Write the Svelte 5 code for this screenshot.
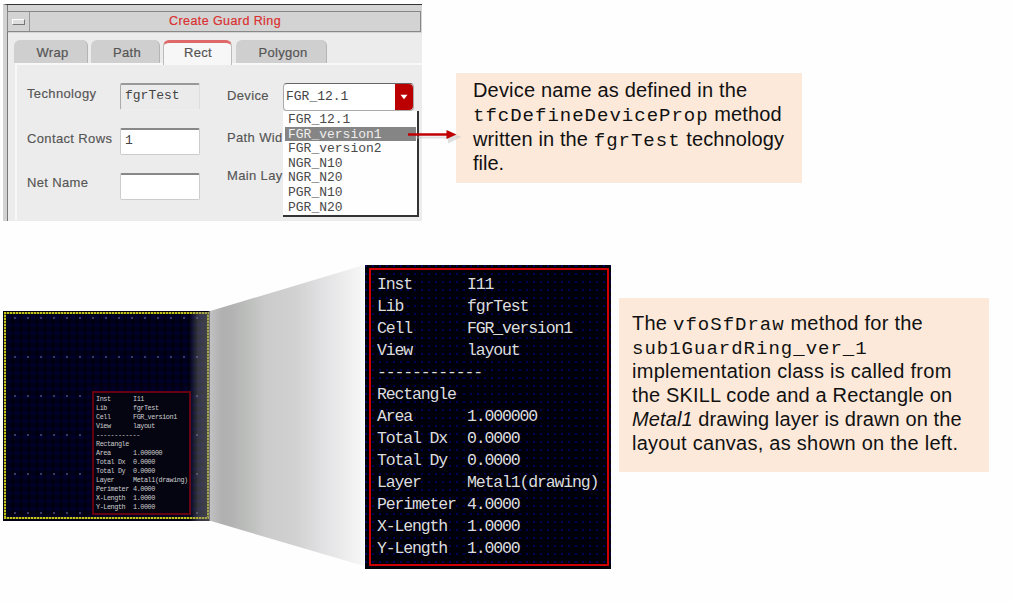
<script>
  const tabs = [
    { name: 'Wrap', w: 74, gap: 3 },
    { name: 'Path', w: 69, gap: 3 },
    { name: 'Rect', w: 69, gap: 4, active: true },
    { name: 'Polygon', w: 91, gap: 0 }
  ];
  const options = ['FGR_12.1', 'FGR_version1', 'FGR_version2', 'NGR_N10', 'NGR_N20', 'PGR_N10', 'PGR_N20'];
  const info = [
    ['Inst', 'I11'],
    ['Lib', 'fgrTest'],
    ['Cell', 'FGR_version1'],
    ['View', 'layout'],
    ['------------', ''],
    ['Rectangle', ''],
    ['Area', '1.000000'],
    ['Total Dx', '0.0000'],
    ['Total Dy', '0.0000'],
    ['Layer', 'Metal1(drawing)'],
    ['Perimeter', '4.0000'],
    ['X-Length', '1.0000'],
    ['Y-Length', '1.0000']
  ];
</script>

{#snippet report()}
  {#each info as [key, value]}
    <div class="line"><span class="key">{key}</span><span>{value}</span></div>
  {/each}
{/snippet}

<main>
  <section class="top">
    <div class="window">
      <header>
        <div class="sysmenu"><i></i></div>
        <h1>Create Guard Ring</h1>
      </header>
      <nav>
        {#each tabs as t}
          <div class="tab" class:active={t.active} style="width:{t.w}px;margin-right:{t.gap}px">{t.name}</div>
        {/each}
      </nav>
      <div class="form">
        <div class="labels">
          <span>Technology</span><span>Contact Rows</span><span>Net Name</span>
        </div>
        <div class="fields">
          <div class="field off">fgrTest</div>
          <div class="field">1</div>
          <div class="field"></div>
        </div>
        <div class="labels right">
          <span>Device</span><span>Path Wid</span><span>Main Lay</span>
        </div>
        <div class="combo">
          <div class="select">
            <span>FGR_12.1</span>
            <b><svg width="8" height="6" viewBox="0 0 8 6"><path d="M0.5 0.8H7.5L4 5.2Z" fill="#fff" /></svg></b>
          </div>
          <div class="list">
            {#each options as o, i}
              <div class="option" class:picked={i === 1}>{o}</div>
            {/each}
          </div>
        </div>
      </div>
      <svg class="arrow" width="56" height="18" viewBox="0 0 56 18">
        <path d="M10 9.5H45M44 6L54 9L44 14Z" stroke="#bbb" stroke-width="2" fill="#bbb" opacity=".45" />
        <path d="M3 6.5H43" stroke="#c00000" stroke-width="2.6" />
        <path d="M41.5 2L51.5 6.5L41.5 11Z" fill="#c00000" />
      </svg>
    </div>
    <aside class="note first">
      <p class="a1">Device name as defined in the</p>
      <p class="a2"><code>tfcDefineDeviceProp</code> method</p>
      <p class="a3">written in the <code>fgrTest</code> technology</p>
      <p>file.</p>
    </aside>
  </section>

  <section class="bottom">
    <div class="canvas">
      <div class="edge"></div>
      <div class="mini">{@render report()}</div>
    </div>
    <svg class="beam" width="175" height="308" viewBox="0 0 175 308">
      <defs>
        <linearGradient id="fade" x1="0" x2="1" y1="0" y2="0">
          <stop offset="0" stop-color="#777" stop-opacity="0" />
          <stop offset=".05" stop-color="#858585" stop-opacity=".4" />
          <stop offset=".115" stop-color="#858585" stop-opacity=".5" />
          <stop offset=".12" stop-color="#c0c1c0" />
          <stop offset=".19" stop-color="#b0b0b0" />
          <stop offset=".25" stop-color="#b4b3b4" />
          <stop offset=".34" stop-color="#bcbfbc" />
          <stop offset=".44" stop-color="#cbcbcb" />
          <stop offset=".62" stop-color="#d2d2d2" />
          <stop offset=".76" stop-color="#e1e1e3" />
          <stop offset="1" stop-color="#f7f7f7" />
        </linearGradient>
      </defs>
      <path d="M0 49H18L175 2V303L22 258H0Z" fill="url(#fade)" />
    </svg>
    <div class="zoomed">{@render report()}</div>
    <aside class="note second">
      <p class="b1">The <code>vfoSfDraw</code> method for the</p>
      <p><code>sub1GuardRing_ver_1</code></p>
      <p class="b3">implementation class is called from</p>
      <p class="b4">the SKILL code and a Rectangle on</p>
      <p class="b5"><em>Metal1</em> drawing layer is drawn on the</p>
      <p class="b6">layout canvas, as shown on the left.</p>
    </aside>
  </section>
</main>

<style>
  :global(body) { background: #fefefe; }
  main { width: 1013px; height: 602px; overflow: hidden; box-sizing: border-box; padding: 4px 0 0 3px; font-family: "Liberation Sans", Arial, sans-serif; color: #111; }
  p, h1 { margin: 0; font-weight: normal; }
  .top { display: flex; align-items: flex-start; height: 259px; }
  .window { position: relative; box-sizing: border-box; width: 419px; height: 217px; border-top: 1px solid #333; background: linear-gradient(#d4d4d4 28px, #ececec 28px); border-left: 4px solid #d2d2d2; box-shadow: inset 1px 0 #777; padding-top: 6px; }
  header { display: flex; height: 21px; box-sizing: border-box; border: 1px solid #888; background: #d3d3d3; margin-right: 1px; }
  .sysmenu { width: 21px; border-right: 1px solid #999; display: flex; align-items: center; justify-content: center; }
  .sysmenu i { width: 11px; height: 4px; background: #ddd; border: 1px solid #fff; border-right-color: #777; border-bottom-color: #777; }
  h1 { flex: 1; padding-left: 139px; font-size: 12.5px; line-height: 19px; color: #d93030; letter-spacing: .42px; -webkit-text-stroke: .2px #d93030; }
  nav { display: flex; height: 23px; padding: 8px 0 0 7px; }
  .tab { box-sizing: border-box; height: 23px; background: #cfcfcf; border-radius: 6px 6px 0 0; text-align: center; font-size: 13px; line-height: 26px; letter-spacing: .3px; color: #555; -webkit-text-stroke: .2px; border-right: 1px solid #b4b4b4; padding-left: 4px; }
  .tab.active { height: 25px; background: #f7f7f7; border: 1px solid #bbb; border-top: 3px solid #df6868; border-bottom: 0; line-height: 20px; padding-left: 1px; }
  .form { display: flex; height: 157px; margin-left: 8px; border-top: 2px solid #f8f8f8; box-sizing: border-box; box-shadow: inset 2px 0 #f8f8f8; font-size: 13px; color: #555; }
  .labels { display: flex; flex-direction: column; width: 92px; padding: 18px 0 0 12px; box-sizing: border-box; white-space: nowrap; letter-spacing: .36px; -webkit-text-stroke: .15px; }
  .labels span { height: 44.5px; line-height: 22px; }
  .fields { display: flex; flex-direction: column; gap: 18px; padding-top: 18px; margin-left: 13px; width: 80px; }
  .field { box-sizing: border-box; height: 27px; border: 1px solid #ccc; border-top: 2px solid #888; border-radius: 2px; background: #fff; font: 13px/21px "Liberation Mono", monospace; padding-left: 4px; color: #444; }
  .field.off { background: #ebebeb; border-color: #999 #ddd #eee #aaa; }
  .labels.right { display: grid; grid-template-rows: 42px 38px 30px; margin: 0 -13px 0 1px; width: 95px; padding: 20px 0 0 26px; overflow: hidden; }
  .labels.right span { height: auto; }
  .combo { position: relative; width: 136px; padding-top: 18px; }
  .select { display: flex; justify-content: space-between; box-sizing: border-box; width: 131px; height: 28px; border: 1px solid #aaa; border-top-color: #666; border-radius: 4px; background: #fff; font: 13px/26px "Liberation Mono", monospace; padding-left: 2px; color: #444; }
  .select b { width: 18px; display: flex; align-items: center; justify-content: center; background: #ba0000; border-radius: 0 4px 4px 0; }
  .list { box-sizing: border-box; width: 136px; height: 106px; padding: 1px 1px 0 2px; background: #fefefe; border-right: 2px solid #333; border-bottom: 2px solid #333; }
  .option { height: 14.6px; font: 13px/15.5px "Liberation Mono", monospace; color: #4a4a4a; padding-left: 3px; }
  .option.picked { background: #858585; color: #eee; }
  .arrow { position: absolute; left: 398px; top: 123px; }
  .note { box-sizing: border-box; background: #fce9da; font-size: 20px; white-space: nowrap; }
  .note code { font: 19px "Liberation Mono", monospace; line-height: 1; letter-spacing: 1px; }
  .first { margin: 69px 0 0 34px; width: 346px; height: 110px; padding: 5px 0 0 17px; }
  .first p { height: 24.4px; line-height: 24px; }
  .a1 { letter-spacing: .18px; }
  .a2 { letter-spacing: .1px; }
  .a3 { letter-spacing: .12px; }
  .b1 { letter-spacing: .25px; }
  .b3 { letter-spacing: .27px; }
  .b4 { letter-spacing: .16px; }
  .b5 { letter-spacing: .11px; }
  .b6 { letter-spacing: .26px; }
  .bottom { display: flex; align-items: flex-start; }
  .canvas { position: relative; box-sizing: border-box; width: 207px; height: 210px; margin-top: 48px; padding: 80px 0 0 89px; background: radial-gradient(circle at 2px 2px, #3c3c68 .7px, transparent 1px) 10px 5px / 13px 39px, repeating-linear-gradient(90deg, #00000066 0 4px, transparent 4px 8px), repeating-linear-gradient(#00001a 0 4px, #00002c 4px 8px); }
  .edge { position: absolute; inset: 1px 1px 2px; border: 3px solid transparent; background: linear-gradient(#00000000, #00000000) padding-box;
    background:
      repeating-linear-gradient(90deg, #c4c41c 0 2px, #4a4a00 2px 3px) top / 100% 2px no-repeat,
      repeating-linear-gradient(90deg, #c4c41c 0 2px, #4a4a00 2px 3px) bottom / 100% 2px no-repeat,
      repeating-linear-gradient(#c4c41c 0 2px, #4a4a00 2px 3px) left / 2px 100% no-repeat,
      repeating-linear-gradient(#c4c41c 0 2px, #4a4a00 2px 3px) right / 2px 100% no-repeat;
    border: 0; }
  .mini { position: relative; box-sizing: border-box; width: 99px; height: 124px; padding: 2px 0 0 2px; background: #050512; border: 2px solid #650010; color: #ccc; font: 6.8px/9px "Liberation Mono", monospace; letter-spacing: -.43px; }
  .line { display: flex; white-space: pre; height: 9px; }
  .mini .key { width: 37px; }
  .beam { margin-left: -21px; position: relative; flex: none; }
  .zoomed { position: relative; flex: none; margin: 2px 0 0 1px; box-sizing: border-box; width: 246px; height: 304px; padding: 9px 0 0 12px; background: radial-gradient(circle at 1px 1px, #000070 .6px, transparent 1px) 0 0 / 7px 8px, #00000b; color: #ddd; font: 16.5px/22px "Liberation Mono", monospace; letter-spacing: -1.15px; }
  .zoomed::after { content: ''; position: absolute; inset: 3px 2px 3px 4px; border: 2px solid #d00000; }
  .zoomed .line { height: 22px; }
  .zoomed .key { width: 90px; }
  .second { margin: 35px 0 0 8px; width: 370px; height: 174px; padding: 13px 0 0 13px; }
  .second p { height: 24px; line-height: 24px; }
</style>
